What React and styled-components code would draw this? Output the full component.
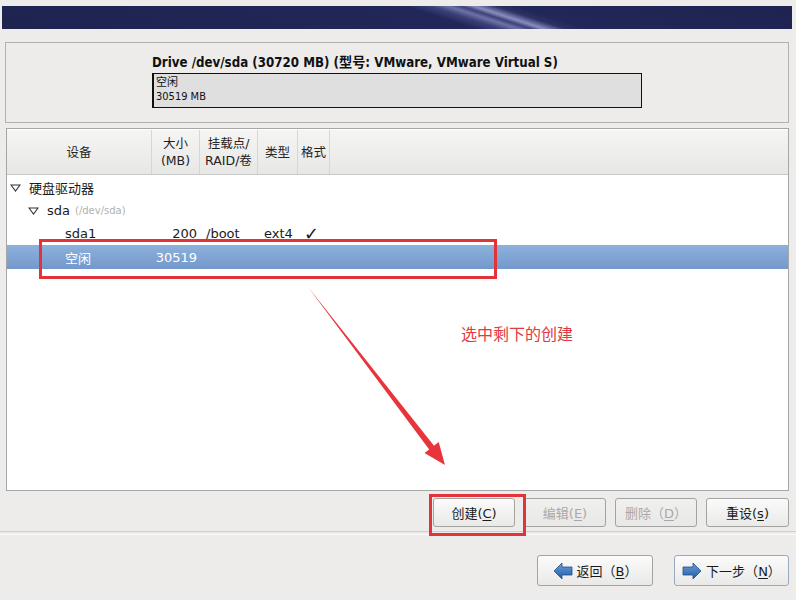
import React from "react";
import styled, { createGlobalStyle } from "styled-components";

const GlobalStyle = createGlobalStyle`
  html, body {
    margin: 0;
    padding: 0;
    background: #edecea;
  }
  body {
    font-family: "DejaVu Sans", "Noto Sans CJK SC", sans-serif;
    font-size: 13px;
    color: #1a1a1a;
  }
`;

const CJK = `"DejaVu Sans", "Noto Sans CJK SC", sans-serif`;

const Page = styled.div`
  position: relative;
  width: 796px;
  height: 600px;
  overflow: hidden;
  background: #edecea;
  display: flex;
  flex-direction: column;
  padding-top: 6px;
  box-sizing: border-box;
`;

const Banner = styled.div`
  height: 23px;
  margin: 0 4px 0 2px;
  background: linear-gradient(
    18deg,
    #1e2350 0%,
    #222759 55%,
    #3b4079 58%,
    #6e73a6 60%,
    #3c417a 61.5%,
    #8a8ebd 63%,
    #2c3166 65.5%,
    #222759 68%,
    #1e2350 100%
  );
`;

const DrivePanel = styled.div`
  margin: 13px 7px 0 5px;
  height: 81px;
  box-sizing: border-box;
  border: 1px solid #b3b1ad;
  background: #edecea;
  padding: 12px 0 0 146px;
`;

const DriveTitle = styled.div`
  font-family: "DejaVu Sans Condensed", "DejaVu Sans", "Noto Sans CJK SC", sans-serif;
  font-stretch: condensed;
  font-weight: bold;
  font-size: 13.2px;
  line-height: 15px;
  color: #111;
`;

const DriveBar = styled.div`
  margin-top: 3px;
  width: 490px;
  height: 35px;
  box-sizing: border-box;
  border: 1px solid #111;
  border-left-width: 2px;
  background: #dfdfdf;
  padding: 2px 0 0 2px;
  font-family: "DejaVu Sans Condensed", "DejaVu Sans", "Noto Sans CJK SC", sans-serif;
  font-stretch: condensed;
  font-size: 11px;
  line-height: 14px;
  color: #111;
`;

const TreePanel = styled.div`
  margin: 5px 7px 0 6px;
  height: 363px;
  box-sizing: border-box;
  border: 1px solid #a6a6a6;
  background: #fff;
  display: flex;
  flex-direction: column;
`;

const HeaderRow = styled.div`
  display: grid;
  grid-template-columns: 145px 48px 58px 40px 32px 1fr;
  height: 46px;
  box-sizing: border-box;
  border-top: 1px solid #fff;
  border-bottom: 1px solid #c9c9c9;
  background: linear-gradient(#f5f5f4, #e7e7e6);
`;

const HeaderCell = styled.div`
  display: flex;
  align-items: center;
  justify-content: center;
  text-align: center;
  font-size: 12.5px;
  line-height: 17px;
  color: #222;
  border-right: ${(p) => (p.$last ? "none" : "1px solid #d6d6d4")};
  white-space: pre-line;
`;

const Body = styled.div`
  padding-top: 1px;
  display: flex;
  flex-direction: column;
`;

const Row = styled.div`
  display: grid;
  grid-template-columns: 145px 48px 58px 40px 32px 1fr;
  height: ${(p) => (p.$selected ? 24 : 23)}px;
  align-items: center;
  font-family: ${CJK};
  font-size: 13px;
  color: ${(p) => (p.$selected ? "#fff" : "#1a1a1a")};
  background: ${(p) =>
    p.$selected ? "linear-gradient(#8db1dc, #7399cb)" : "transparent"};
`;

const NameCell = styled.div`
  display: flex;
  align-items: center;
  padding-left: ${(p) => p.$indent}px;
  white-space: nowrap;
`;

const SizeCell = styled.div`
  text-align: right;
  padding-right: 3px;
`;

const TextCell = styled.div`
  padding-left: 6px;
  white-space: nowrap;
`;

const Expander = styled.svg`
  width: 11px;
  height: 8px;
  margin-right: 8px;
`;

const Muted = styled.span`
  margin-left: 5px;
  font-size: 10px;
  color: #b0b0b0;
`;

const Check = styled.span`
  padding-left: 6px;
  font-size: 18px;
  line-height: 1;
`;

const ActionBar = styled.div`
  display: flex;
  justify-content: flex-end;
  gap: 9px;
  margin: 7px 7px 0 0;
`;

const Button = styled.button`
  display: flex;
  align-items: center;
  justify-content: center;
  gap: 4px;
  width: ${(p) => p.$w}px;
  height: ${(p) => p.$h}px;
  padding: 0;
  box-sizing: border-box;
  border: 1px solid ${(p) => (p.$focus ? "#9aa9c0" : "#a3a3a1")};
  border-radius: 3px;
  background: ${(p) =>
    p.disabled
      ? "linear-gradient(#f0f0ef, #e8e8e7)"
      : "linear-gradient(#fbfbfb, #e9e9e8)"};
  color: ${(p) => (p.disabled ? "#a9a9a9" : "#1a1a1a")};
  font-family: ${CJK};
  font-size: 13px;
  cursor: default;
  u {
    text-decoration: underline;
    text-underline-offset: 2px;
  }
`;

const Separator = styled.div`
  margin-top: 4px;
  height: 2px;
  border-top: 1px solid #cfcfcd;
  border-bottom: 1px solid #fafafa;
`;

const NavBar = styled.div`
  display: flex;
  justify-content: flex-end;
  gap: 21px;
  margin: 20px 7px 0 0;
`;

const ArrowIcon = styled.svg`
  width: 20px;
  height: 18px;
`;

const Highlight = styled.div`
  position: absolute;
  left: ${(p) => p.$x}px;
  top: ${(p) => p.$y}px;
  width: ${(p) => p.$w}px;
  height: ${(p) => p.$h}px;
  box-sizing: border-box;
  border: 3px solid #e2333a;
  pointer-events: none;
`;

const Note = styled.div`
  position: absolute;
  left: 461px;
  top: 323px;
  font-family: "Noto Sans CJK SC", sans-serif;
  font-size: 16px;
  line-height: 20px;
  color: #e23a3f;
`;

const ArrowLayer = styled.svg`
  position: absolute;
  left: 0;
  top: 0;
  width: 796px;
  height: 600px;
  pointer-events: none;
`;

const Triangle = () => (
  <Expander viewBox="0 0 11 8">
    <polygon points="1,1 10,1 5.5,7" fill="none" stroke="#333" strokeWidth="1.1" />
  </Expander>
);

const NavArrow = ({ dir }) => (
  <ArrowIcon viewBox="0 0 20 18">
    <defs>
      <linearGradient id={`g-${dir}`} x1="0" y1="0" x2="0" y2="1">
        <stop offset="0" stopColor="#6f9fd8" />
        <stop offset="1" stopColor="#1f5aa6" />
      </linearGradient>
    </defs>
    {dir === "left" ? (
      <polygon points="1,9 9,1 9,5 19,5 19,13 9,13 9,17" fill={`url(#g-${dir})`} stroke="#1d4f90" strokeWidth="0.8" />
    ) : (
      <polygon points="19,9 11,1 11,5 1,5 1,13 11,13 11,17" fill={`url(#g-${dir})`} stroke="#1d4f90" strokeWidth="0.8" />
    )}
  </ArrowIcon>
);

const columns = ["设备", "大小\n(MB)", "挂载点/\nRAID/卷", "类型", "格式", ""];

export default function App() {
  return (
    <>
      <GlobalStyle />
      <Page>
        <Banner />

        <DrivePanel>
          <DriveTitle>Drive /dev/sda (30720 MB) (型号: VMware, VMware Virtual S)</DriveTitle>
          <DriveBar>
            <div>空闲</div>
            <div>30519 MB</div>
          </DriveBar>
        </DrivePanel>

        <TreePanel>
          <HeaderRow>
            {columns.map((c, i) => (
              <HeaderCell key={i} $last={i === columns.length - 1}>
                {c}
              </HeaderCell>
            ))}
          </HeaderRow>
          <Body>
            <Row>
              <NameCell $indent={3}>
                <Triangle />
                硬盘驱动器
              </NameCell>
            </Row>
            <Row>
              <NameCell $indent={21}>
                <Triangle />
                sda<Muted>(/dev/sda)</Muted>
              </NameCell>
            </Row>
            <Row>
              <NameCell $indent={58}>sda1</NameCell>
              <SizeCell>200</SizeCell>
              <TextCell>/boot</TextCell>
              <TextCell>ext4</TextCell>
              <Check>✓</Check>
            </Row>
            <Row $selected>
              <NameCell $indent={58}>空闲</NameCell>
              <SizeCell>30519</SizeCell>
            </Row>
          </Body>
        </TreePanel>

        <ActionBar>
          <Button $w={82} $h={29}>
            <span>创建(<u>C</u>)</span>
          </Button>
          <Button $w={82} $h={29} disabled>
            <span>编辑(<u>E</u>)</span>
          </Button>
          <Button $w={82} $h={29} disabled>
            <span>删除（<u>D</u>）</span>
          </Button>
          <Button $w={83} $h={29}>
            <span>重设(<u>s</u>)</span>
          </Button>
        </ActionBar>

        <Separator />

        <NavBar>
          <Button $w={116} $h={31}>
            <NavArrow dir="left" />
            <span>返回（<u>B</u>）</span>
          </Button>
          <Button $w={115} $h={31} $focus>
            <NavArrow dir="right" />
            <span>下一步（<u>N</u>）</span>
          </Button>
        </NavBar>

        <Highlight $x={39} $y={239} $w={458} $h={40} />
        <Highlight $x={429} $y={494} $w={97} $h={42} />
        <Note>选中剩下的创建</Note>
        <ArrowLayer viewBox="0 0 796 600">
          <polygon
            points="308,287 429.2,449.4 424.5,453.1 445,465 438.7,442.1 434,445.8"
            fill="#e8353b"
          />
        </ArrowLayer>
      </Page>
    </>
  );
}
